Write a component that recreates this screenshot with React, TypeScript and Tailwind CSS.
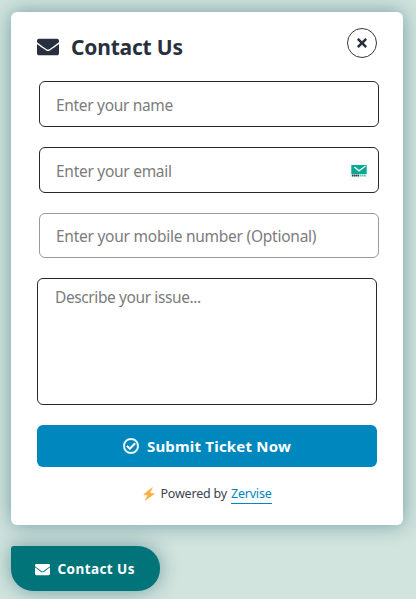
import React from "react";
import { FaEnvelope, FaRegCheckCircle, FaTimes } from "react-icons/fa";

function TempMailBadge() {
  return (
    <svg viewBox="0 0 20 20" className="absolute top-[14px] right-[10px] h-5 w-5" aria-hidden="true">
      <rect width="20" height="20" rx="2" fill="#f9fafa" />
      <rect x="2.3" y="4" width="15.4" height="9" rx="0.6" fill="#06a892" />
      <path d="M5.4 6 10 9.8 16.5 5" fill="none" stroke="#effaf7" strokeWidth="1.4" />
      <path d="M2.8 14.6h7.4" stroke="#33424e" strokeWidth="2" strokeDasharray="1.6 .3" />
      <path d="M10.6 14.6h6.6" stroke="#5cc9ba" strokeWidth="2" strokeDasharray="1.6 .3" />
    </svg>
  );
}

const field =
  "block w-[340px] rounded-md border bg-white px-4 text-[15.5px] text-[#28303d] placeholder:text-[#7c7c7c] outline-none";

export default function App() {
  return (
    <main className="flex h-[599px] w-[416px] flex-col items-start overflow-hidden bg-[#d1e4dd] pt-3 pl-[11px] font-['Noto_Sans',sans-serif] text-[#28303d]">
      <section className="h-[513px] w-[392px] rounded-md bg-white px-[26px] pt-4 shadow-[0_0_20px_rgba(0,70,95,0.45)]">
        <header className="flex h-[53px] items-start justify-between">
          <h1 className="flex items-center pt-[3px] text-[21px] leading-8 font-bold">
            <FaEnvelope className="mr-3 h-[22px] w-[22px]" />
            <span className="tracking-[-0.2px]">Contact Us</span>
          </h1>
          <button aria-label="Close" className="flex h-[30px] w-[30px] items-center justify-center rounded-full border border-[#39393c]">
            <FaTimes className="h-[14px] w-[14px]" />
          </button>
        </header>
        <form className="flex flex-col">
          <div className="flex flex-col gap-5 pl-[2px]">
            <input placeholder="Enter your name" className={`${field} h-[46px] border-[#28282b] pt-[2px] tracking-[-0.32px]`} />
            <div className="relative w-[340px]">
              <input placeholder="Enter your email" className={`${field} h-[46px] border-[#28282b] pt-[2px] tracking-[-0.28px]`} />
              <TempMailBadge />
            </div>
            <input placeholder="Enter your mobile number (Optional)" className={`${field} h-[45px] border-[#999999] pt-px tracking-[-0.25px]`} />
          </div>
          <textarea placeholder="Describe your issue..." className={`${field} mt-5 h-[127px] resize-none border-[#28282b] pt-[7px] pl-[17px] leading-[23px] tracking-[-0.4px]`} />
          <button type="button" className="mt-5 flex h-[42px] items-center justify-center rounded-md bg-[#0087be] text-[15px] font-bold text-white">
            <FaRegCheckCircle className="mr-2 h-4 w-4" stroke="currentColor" strokeWidth={14} />
            <span className="tracking-[0.2px]">Submit Ticket Now</span>
          </button>
        </form>
        <p className="mt-[17px] flex h-5 items-center justify-center pl-px text-[12.5px] tracking-[-0.2px] text-[#3b424e]">
          <svg viewBox="0 0 12 14" className="mr-[5px] h-[14px] w-3" aria-hidden="true">
            <path d="M9.4.5.6 7.6l4.3.7-2.8 5.2 9.3-6.7-4.5-.9z" fill="#ffac40" stroke="#ffac40" strokeWidth="0.5" strokeLinejoin="round" />
          </svg>
          <span>Powered by</span>
          <a className="ml-1 h-[19px] border-b border-[#0087be] leading-[18px] text-[#0087be]">Zervise</a>
        </p>
      </section>
      <button className="mt-[21px] flex h-[45px] w-[149px] items-center rounded-[22px] rounded-tl-[3px] bg-[#007478] pt-px pl-[23.5px] text-[13.5px] font-bold text-white shadow-[0_0_20px_rgba(0,70,95,0.45)]">
        <FaEnvelope className="mr-2 h-[15px] w-[15px]" />
        <span className="tracking-[0.42px]">Contact Us</span>
      </button>
    </main>
  );
}
